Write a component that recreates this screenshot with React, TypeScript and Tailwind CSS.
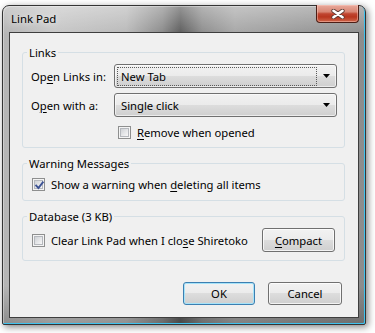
import React from "react";

function U({ children }: { children: React.ReactNode }) {
  return <span className="underline decoration-[1px] underline-offset-[2px]">{children}</span>;
}

function Check({ checked }: { checked?: boolean }) {
  return (
    <span className="relative flex h-[13px] w-[13px] shrink-0 items-center justify-center border border-[#8e8f8f] bg-[#f4f4f4]">
      <span className="h-[9px] w-[9px] border border-[#b5b8bd] bg-[image:linear-gradient(135deg,#cfd2d6_0%,#e6e7e9_55%,#f7f7f7_100%)]" />
      {checked && (
        <svg className="absolute left-[1px] top-[1px]" width="11" height="11" viewBox="0 0 11 11">
          <path d="M2.2 5.6 L4.4 8 L8.8 2.3" fill="none" stroke="#3d5394" strokeWidth="1.9" strokeLinecap="square" />
        </svg>
      )}
    </span>
  );
}

function Combo({ value, focused }: { value: string; focused?: boolean }) {
  return (
    <div className="flex h-[24px] w-[223px] items-center rounded-[3px] border border-[#707070] bg-[image:linear-gradient(180deg,#f2f2f2_0%,#ebebeb_50%,#dddddd_50%,#cfcfcf_100%)] shadow-[inset_0_0_0_1px_rgba(255,255,255,0.6)]">
      <div
        className={
          focused
            ? "ml-[2px] flex h-[19px] flex-1 items-center border border-dotted border-[#5a5a5a] pl-[3px]"
            : "ml-[2px] flex h-[19px] flex-1 items-center border border-transparent pl-[3px]"
        }
      >
        {value}
      </div>
      <div className="flex w-[19px] justify-center">
        <svg width="7" height="4" viewBox="0 0 7 4">
          <polygon points="0,0 7,0 3.5,4" fill="#000" />
        </svg>
      </div>
    </div>
  );
}

function Btn({ children, def, w }: { children: React.ReactNode; def?: boolean; w: string }) {
  return (
    <button
      className={
        (def
          ? "border-[#3c7fb1] shadow-[inset_0_0_0_1px_#a6e3f9] "
          : "border-[#707070] shadow-[inset_0_0_0_1px_rgba(255,255,255,0.75)] ") +
        w +
        " flex items-center justify-center rounded-[3px] border bg-[image:linear-gradient(180deg,#f2f2f2_0%,#ebebeb_50%,#dddddd_50%,#cfcfcf_100%)] leading-[15px] text-black"
      }
    >
      {children}
    </button>
  );
}

export default function App() {
  return (
    <div className="h-[333px] w-[375px] overflow-hidden bg-white pl-[2px] pt-[5px] font-['Noto_Sans','Open_Sans',sans-serif] text-[11.25px] leading-[15px] text-black">
      <div className="flex h-[320px] w-[364px] flex-col rounded-t-[7px] rounded-b-[2px] border border-[#343434] bg-[image:linear-gradient(180deg,rgba(255,255,255,0.35)_0%,rgba(255,255,255,0)_9%,rgba(0,0,0,0)_88%,rgba(0,0,0,0.22)_100%),linear-gradient(90deg,#b4b4b4_0%,#c6c6c6_14%,#b9b9b9_34%,#8a8a8a_44%,#5c5c5c_49%,#8c8c8c_55%,#a6a6a6_64%,#9a9a9a_80%,#8c8c8c_100%)] px-[6px] pb-[6px] shadow-[inset_-1px_-1px_0_#3ec3ef,inset_1px_1px_0_rgba(255,255,255,0.35),2px_2px_7px_rgba(0,0,0,0.5)]">
        <div className="flex h-[26px] items-start justify-between">
          <span className="pl-[2px] pt-[5px] text-[11.4px] leading-[15px] [text-shadow:0_0_6px_rgba(255,255,255,0.9)]">
            Link Pad
          </span>
          <div className="mt-[-1px] flex h-[18px] w-[43px] items-center justify-center rounded-b-[4px] border border-t-0 border-[#4c1e16] bg-[image:linear-gradient(180deg,#e9aa9c_0%,#d88775_40%,#c04530_52%,#b8361f_70%,#d0664a_100%)] shadow-[inset_0_0_0_1px_rgba(255,210,200,0.45)]">
            <svg width="14" height="10" viewBox="0 0 14 10">
              <path d="M2.5 1.8 L11.5 8.2 M11.5 1.8 L2.5 8.2" stroke="#5a3a34" strokeWidth="4.2" strokeLinecap="round" />
              <path d="M2.5 1.8 L11.5 8.2 M11.5 1.8 L2.5 8.2" stroke="#ffffff" strokeWidth="2.6" strokeLinecap="round" />
            </svg>
          </div>
        </div>
        <div className="flex flex-1 flex-col border border-[#3e3e3e] bg-[#f0f0f0] pl-[12px] pr-[13px] pt-[12px]">
          <fieldset className="rounded-[3px] border border-[#d5dfe5] pb-[5px] pl-[8px] pr-[7px] pt-[4px]">
            <legend className="ml-[-4px] px-[2px] leading-[15px]">Links</legend>
            <div className="flex h-[24px] items-center">
              <span className="w-[83px]">
                Op<U>e</U>n Links in:
              </span>
              <Combo value="New Tab" focused />
            </div>
            <div className="mt-[5px] flex h-[24px] items-center">
              <span className="w-[83px]">
                O<U>p</U>en with a:
              </span>
              <Combo value="Single click" />
            </div>
            <div className="mt-[5px] flex h-[20px] items-center gap-[6px] pl-[87px]">
              <Check />
              <span>
                <U>R</U>emove when opened
              </span>
            </div>
          </fieldset>
          <fieldset className="mt-[8px] rounded-[3px] border border-[#d5dfe5] pb-[6px] pl-[9px] pr-[7px] pt-[3px]">
            <legend className="ml-[-5px] px-[2px] leading-[15px]">Warning Messages</legend>
            <div className="flex h-[20px] items-center gap-[6px]">
              <Check checked />
              <span>
                Show a warning when <U>d</U>eleting all items
              </span>
            </div>
          </fieldset>
          <fieldset className="mt-[8px] rounded-[3px] border border-[#d5dfe5] pb-[8px] pl-[9px] pr-[9px] pt-[4px]">
            <legend className="ml-[-5px] px-[2px] leading-[15px]">Database (3 KB)</legend>
            <div className="flex h-[24px] items-center justify-between">
              <div className="flex items-center gap-[6px]">
                <Check />
                <span>
                  Clear Link Pad when I clo<U>s</U>e Shiretoko
                </span>
              </div>
              <Btn w="h-[24px] w-[73px]">
                <span>
                  <U>C</U>ompact
                </span>
              </Btn>
            </div>
          </fieldset>
          <div className="mt-[21px] flex justify-end gap-[13px] pr-[3px]">
            <Btn def w="h-[23px] w-[72px]">
              OK
            </Btn>
            <Btn w="h-[23px] w-[74px]">Cancel</Btn>
          </div>
        </div>
      </div>
    </div>
  );
}
